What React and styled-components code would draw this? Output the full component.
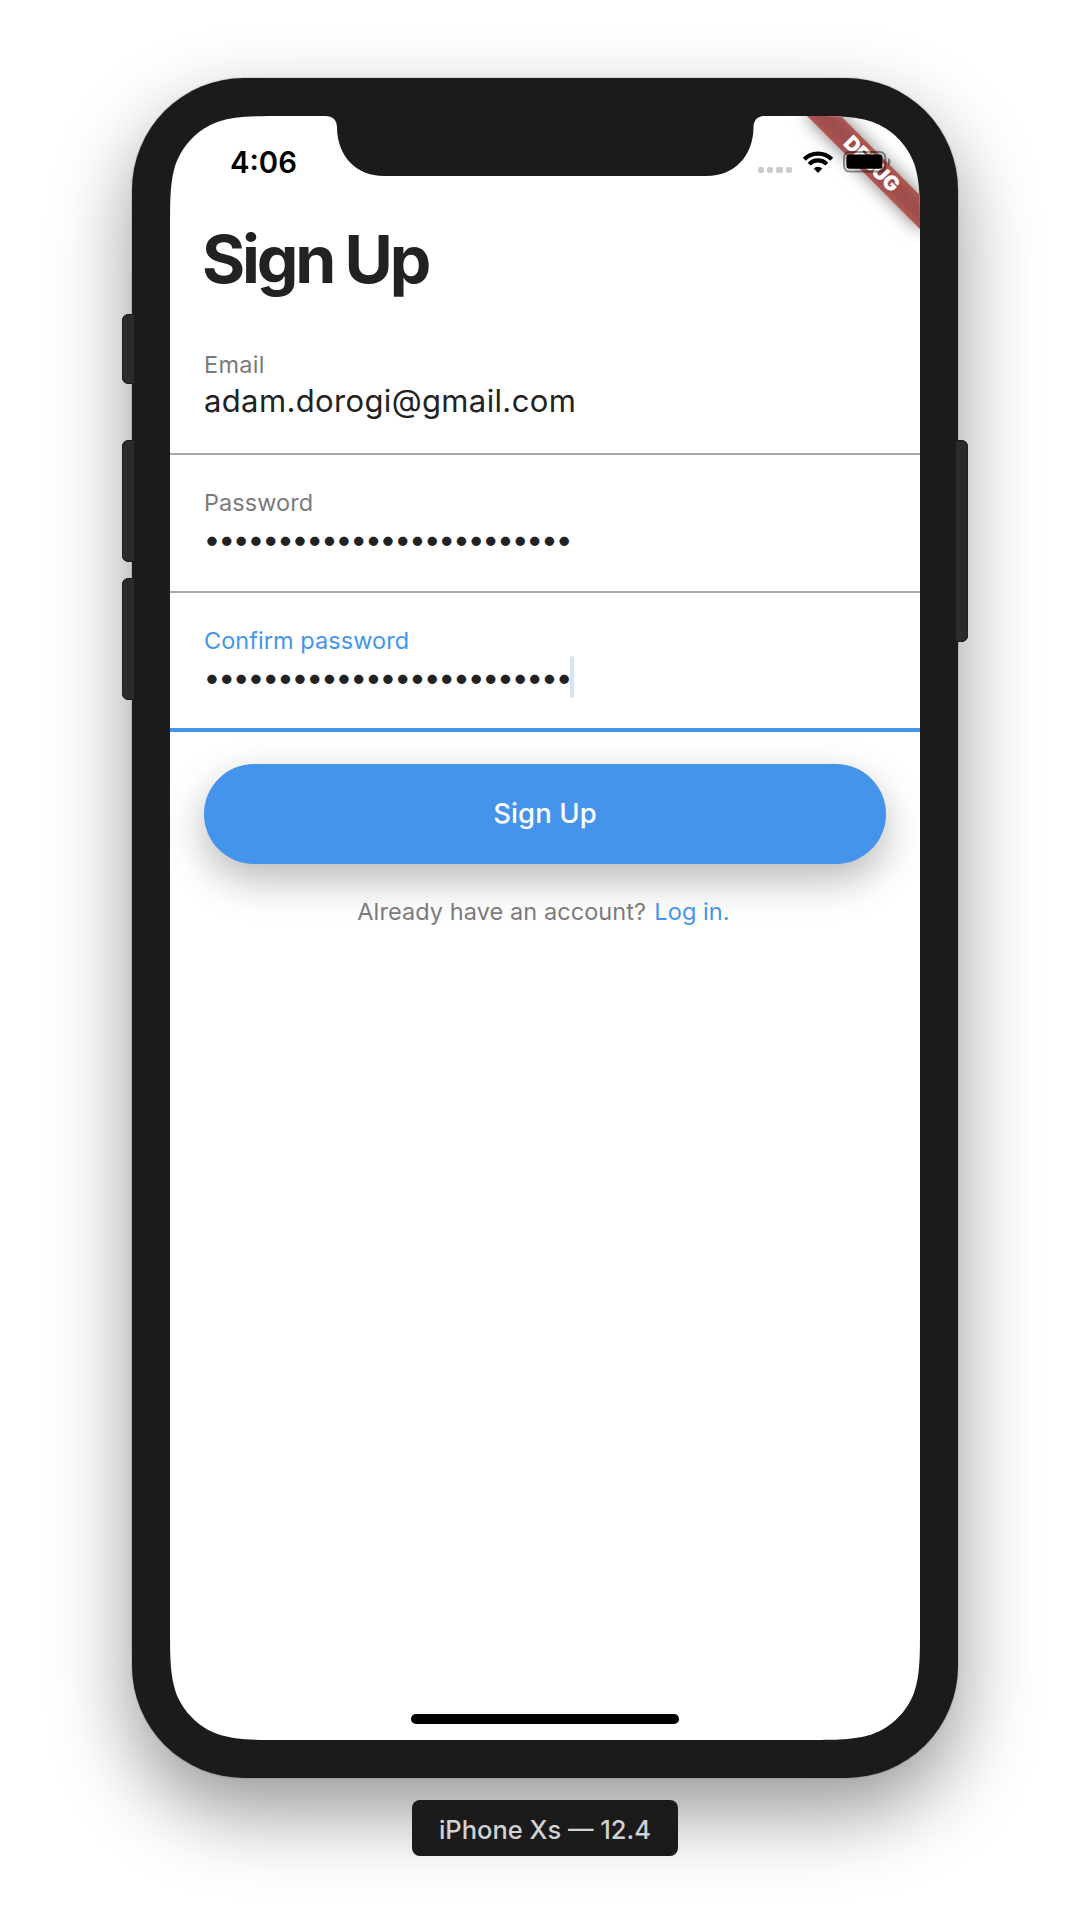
import React from "react";
import styled, { createGlobalStyle } from "styled-components";

const ink = "#222222";
const blue = "#4594ec";
const grey = "#7b7b7b";
const shell = "#1b1b1b";

/* Continuous-curvature rounded rectangle for the display glass. */
function squircle(w, h, r) {
  const a = 1.52866 * r;
  const b = 1.08849 * r;
  const c = 0.86841 * r;
  const d = 0.63149 * r;
  const e = 0.07491 * r;
  const f = 0.37282 * r;
  const g = 0.16906 * r;
  return [
    `M${a} 0 H${w - a}`,
    `C${w - b} 0 ${w - c} 0 ${w - d} ${e}`,
    `C${w - f} ${g} ${w - g} ${f} ${w - e} ${d}`,
    `C${w} ${c} ${w} ${b} ${w} ${a}`,
    `V${h - a}`,
    `C${w} ${h - b} ${w} ${h - c} ${w - e} ${h - d}`,
    `C${w - g} ${h - f} ${w - f} ${h - g} ${w - d} ${h - e}`,
    `C${w - c} ${h} ${w - b} ${h} ${w - a} ${h}`,
    `H${a}`,
    `C${b} ${h} ${c} ${h} ${d} ${h - e}`,
    `C${f} ${h - g} ${g} ${h - f} ${e} ${h - d}`,
    `C0 ${h - c} 0 ${h - b} 0 ${h - a}`,
    `V${a}`,
    `C0 ${b} 0 ${c} ${e} ${d}`,
    `C${g} ${f} ${f} ${g} ${d} ${e}`,
    `C${c} 0 ${b} 0 ${a} 0 Z`,
  ].join(" ");
}

const Global = createGlobalStyle`
  * { box-sizing: border-box; }
  body {
    margin: 0;
    background: #ffffff;
    font-family: Inter, "Noto Sans", sans-serif;
  }
`;

const Stage = styled.div`
  display: flex;
  flex-direction: column;
  align-items: center;
  width: 1090px;
  height: 1928px;
  padding-top: 78px;
  overflow: hidden;
`;

const Device = styled.div`
  display: flex;
  align-items: stretch;
`;

const Rail = styled.div`
  display: flex;
  flex-direction: column;
  width: 10px;
  z-index: 1;
`;

const SideButton = styled.div`
  flex: none;
  width: 12px;
  height: ${(p) => p.$length}px;
  margin-top: ${(p) => p.$gap}px;
  margin-left: ${(p) => (p.$side === "right" ? "-2px" : "0")};
  border-radius: ${(p) => (p.$side === "right" ? "0 7px 7px 0" : "7px 0 0 7px")};
  background: #2b2b2b;
  box-shadow: inset ${(p) => (p.$side === "right" ? "-1px" : "1px")} 0 0 #1f1f1f,
    inset 0 1px 0 #1a1a1a, inset 0 -1px 0 #1a1a1a;
`;

const Body = styled.div`
  width: 826px;
  height: 1700px;
  padding: 38px;
  border-radius: 112px;
  background: ${shell};
  box-shadow: 0 0 0 1px rgba(0, 0, 0, 0.1), 0 34px 80px rgba(0, 0, 0, 0.41);
`;

const Screen = styled.div`
  position: relative;
  display: flex;
  flex-direction: column;
  width: 750px;
  height: 1624px;
  padding-bottom: 16px;
  background: #ffffff;
  clip-path: path("${squircle(750, 1624, 76)}");
`;

const NotchShape = styled.svg`
  position: absolute;
  top: 0;
  left: 0;
  z-index: 3;
  display: block;
`;

const StatusBar = styled.div`
  position: relative;
  z-index: 2;
  display: flex;
  align-items: center;
  justify-content: space-between;
  flex: none;
  height: 92px;
  padding: 0 29px 0 60px;
`;

const Clock = styled.span`
  font-size: 29.3px;
  line-height: 36px;
  font-weight: 600;
  color: #000000;
  padding-top: 1px;
`;

const StatusIcons = styled.div`
  display: flex;
  align-items: center;
  gap: 10.5px;
`;

const SignalDots = styled.div`
  display: flex;
  gap: 3.2px;
  padding-top: 16px;
`;

const SignalDot = styled.i`
  width: 6.2px;
  height: 6.2px;
  border-radius: 2px;
  background: #cbcbcb;
`;

const Glyph = styled.svg`
  display: block;
  flex: none;
  overflow: visible;
`;

const DebugBanner = styled.div`
  position: absolute;
  top: 56px;
  left: 670px;
  z-index: 1;
  width: 160px;
  height: 24px;
  transform: rotate(45deg);
  transform-origin: 80px -56px;
  background: linear-gradient(#ae5855, #9f4e4b 35%, #9f4e4b 65%, #ae5855);
  box-shadow: 0 0 17px rgba(0, 0, 0, 0.5);
  color: #ffffff;
  font-size: 20.4px;
  line-height: 24px;
  font-weight: 900;
  letter-spacing: -0.4px;
  text-align: center;
  padding-right: 1px;
`;

const Title = styled.h1`
  margin: 11px 0 18px;
  padding-left: 32px;
  font-size: 66px;
  line-height: 80px;
  font-weight: 700;
  letter-spacing: -3.2px;
  word-spacing: -1px;
  color: ${ink};
`;

const Field = styled.div`
  flex: none;
  height: ${(p) => (p.$active ? 139 : 138)}px;
  padding: 34px 34px 0;
  border-bottom: ${(p) => (p.$active ? `4px solid ${blue}` : "2px solid #a9a9a9")};
`;

const FieldLabel = styled.div`
  font-size: 23.5px;
  line-height: 28px;
  letter-spacing: ${(p) => p.$spacing ?? 0.05}px;
  color: ${(p) => (p.$active ? blue : grey)};
`;

const FieldValue = styled.div`
  display: flex;
  align-items: center;
  height: 40px;
  margin-top: 2px;
  line-height: 40px;
  white-space: nowrap;
  font-size: ${(p) => (p.$masked ? 30 : 31)}px;
  letter-spacing: ${(p) => (p.$masked ? -2.2 : 0.36)}px;
  margin-left: ${(p) => (p.$masked ? -0.5 : 0)}px;
  color: ${ink};
`;

const Caret = styled.i`
  flex: none;
  width: 4px;
  height: 42px;
  border-radius: 2px;
  background: #d3e6f9;
`;

const SubmitButton = styled.button`
  flex: none;
  height: 100px;
  margin: 32px 34px 0;
  padding: 0 0 2px;
  border: 0;
  border-radius: 50px;
  background: ${blue};
  box-shadow: 0 16px 40px rgba(0, 0, 0, 0.28);
  color: #ffffff;
  font-family: inherit;
  font-size: 27.5px;
  font-weight: 500;
  letter-spacing: 0.1px;
`;

const LoginPrompt = styled.p`
  margin: 33px 0 0;
  padding-right: 3px;
  font-size: 23.5px;
  line-height: 30px;
  letter-spacing: 0.08px;
  text-align: center;
  color: ${grey};
  z-index: 1;
`;

const LoginLink = styled.a`
  margin-left: 1.5px;
  color: ${blue};
`;

const HomeIndicator = styled.div`
  align-self: center;
  width: 268px;
  height: 10px;
  margin-top: auto;
  border-radius: 5px;
  background: #000000;
`;

const DeviceTag = styled.div`
  z-index: 1;
  display: flex;
  align-items: center;
  justify-content: center;
  width: 266px;
  height: 56px;
  margin-top: 22px;
  padding-top: 2px;
  border-radius: 8px;
  background: ${shell};
  color: #d2d2d2;
  font-size: 25.5px;
  font-weight: 500;
`;

function Wifi() {
  return (
    <Glyph width="30" height="22" viewBox="0 0 30 22" fill="none" stroke="#000" strokeWidth="4.1">
      <path d="M1.3 8.3 A19.3 19.3 0 0 1 28.7 8.3" />
      <path d="M6.1 13.1 A12.6 12.6 0 0 1 23.9 13.1" />
      <path d="M15 22 L10.7 17.6 A6.2 6.2 0 0 1 19.3 17.6 Z" fill="#000" stroke="none" />
    </Glyph>
  );
}

function Battery() {
  return (
    <Glyph width="48" height="22" viewBox="0 0 48 22">
      <rect x="1" y="1" width="41.4" height="19.6" rx="5.5" fill="none" stroke="#000" strokeOpacity="0.42" strokeWidth="2" />
      <rect x="3.4" y="3.6" width="36" height="14.2" rx="3" fill="#000" />
      <path d="M45 7 C48.4 8.4 48.4 13.4 45 14.8 Z" fill="#000" fillOpacity="0.42" />
    </Glyph>
  );
}

function Notch() {
  return (
    <NotchShape width="750" height="62" viewBox="0 0 750 62">
      <path
        fill={shell}
        d="M155 -1 V0 C163 0 167 4 167 12 C167.5 40 186 60 214 60 H536.5 C564.5 60 583 40 583.5 12 C583.5 4 587.5 0 595.5 0 V-1 Z"
      />
    </NotchShape>
  );
}

const bullets = "•".repeat(25);

export default function App() {
  return (
    <>
      <Global />
      <Stage>
        <Device>
          <Rail>
            <SideButton $gap={236} $length={70} />
            <SideButton $gap={56} $length={122} />
            <SideButton $gap={16} $length={122} />
          </Rail>
          <Body>
            <Screen>
              <Notch />
              <DebugBanner>DEBUG</DebugBanner>
              <StatusBar>
                <Clock>4:06</Clock>
                <StatusIcons>
                  <SignalDots>
                    <SignalDot />
                    <SignalDot />
                    <SignalDot />
                    <SignalDot />
                  </SignalDots>
                  <Wifi />
                  <Battery />
                </StatusIcons>
              </StatusBar>
              <Title>Sign Up</Title>
              <Field>
                <FieldLabel $spacing={0.3}>Email</FieldLabel>
                <FieldValue>adam.dorogi@gmail.com</FieldValue>
              </Field>
              <Field>
                <FieldLabel>Password</FieldLabel>
                <FieldValue $masked>{bullets}</FieldValue>
              </Field>
              <Field $active>
                <FieldLabel $active>Confirm password</FieldLabel>
                <FieldValue $masked>
                  {bullets}
                  <Caret />
                </FieldValue>
              </Field>
              <SubmitButton>Sign Up</SubmitButton>
              <LoginPrompt>
                Already have an account? <LoginLink>Log in.</LoginLink>
              </LoginPrompt>
              <HomeIndicator />
            </Screen>
          </Body>
          <Rail>
            <SideButton $side="right" $gap={362} $length={202} />
          </Rail>
        </Device>
        <DeviceTag>iPhone Xs — 12.4</DeviceTag>
      </Stage>
    </>
  );
}
